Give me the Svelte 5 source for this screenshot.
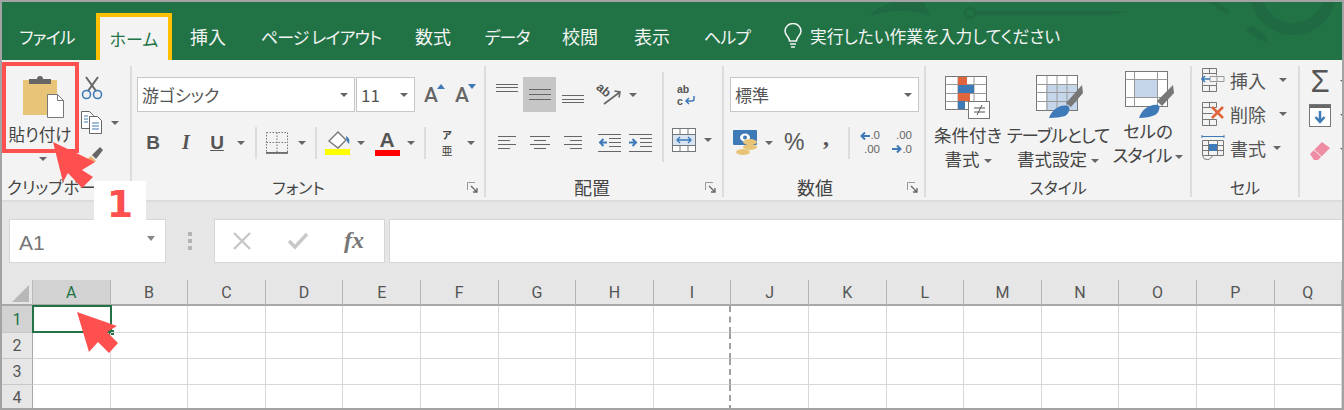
<script>
  const tabs = ["ファイル", "ホーム", "挿入", "ページ レイアウト", "数式", "データ", "校閲", "表示", "ヘルプ"];
  const cols = "ABCDEFGHIJKLMNOPQ".split("");
  const rows = [1, 2, 3, 4];
  const isKana = (s) => /^[\u30A0-\u30FF ]+$/.test(s);
</script>

{#snippet launcher()}
  <svg class="launcher" width="12" height="12" viewBox="0 0 12 12" fill="none" stroke="#777">
    <path d="M.5 8V.5H8" stroke="#999" />
    <path d="M4 4l6 6M10 6v4H6" stroke="#666" stroke-width="1.3" />
  </svg>
{/snippet}

<div class="frame">
  <header class="titlebar">
    <svg class="deco" width="500" height="58" viewBox="0 0 500 58" fill="none" stroke="#1f6a42">
      <path d="M28 14C36 2 58-4 82 0l6 14C68 6 48 8 28 14z" fill="#1f6a42" stroke="none" />
      <circle cx="128" cy="11" r="5" stroke-width="3" />
      <path d="M132 9h156l-20 4H132z" fill="#1f6a42" stroke="none" />
      <path d="M365-4l58 40" stroke-width="5" stroke-dasharray="26 26" />
      <circle cx="451" cy="-10" r="37" stroke-width="12" />
      <path d="M405 26c6 6 12 10 20 12" stroke-width="4" />
    </svg>
    <nav class="tabs">
      {#each tabs as tab, i}
        <div class="tab" class:active={i === 1} class:kana={isKana(tab)}>{tab}</div>
      {/each}
    </nav>
    <div class="tell">
      <svg width="20" height="26" viewBox="0 0 20 26" fill="none" stroke="#f4f4f4" stroke-width="1.5">
        <path d="M6.5 18c0-4-4.500-5.500-4.500-10a8 7.500 0 0 1 16 0c0 4.500-4.500 6-4.500 10z" />
        <path d="M7 21h6M8 24h4" />
      </svg>
      <span>実行したい作業を入力してください</span>
    </div>
  </header>

  <section class="ribbon">
    <div class="group clip">
      <div class="body clip-body">
        <div class="paste">
          <svg width="42" height="42" viewBox="0 0 42 42">
            <rect x="0" y="4" width="34" height="35" fill="#e8c478" />
            <path d="M6 8V3h8a3 3 0 0 1 6 0h8v5z" fill="#666" />
            <path d="M24.500 18.500h10l6 6v17h-16z" fill="#fff" stroke="#777" />
            <path d="M34.500 18.500v6h6" fill="none" stroke="#777" />
          </svg>
          <span>貼り付け</span>
          <i class="caret"></i>
        </div>
        <div class="clip-tools">
          <svg width="22" height="24" viewBox="0 0 22 24" fill="none">
            <path d="M5 1l10 14M17 1L7 15" stroke="#666" stroke-width="2" />
            <circle cx="5.500" cy="18.500" r="4" stroke="#3e79b8" stroke-width="1.600" />
            <circle cx="16.500" cy="18.500" r="4" stroke="#3e79b8" stroke-width="1.600" />
          </svg>
          <div class="copy">
            <svg width="22" height="23" viewBox="0 0 22 23" fill="#fff" stroke="#666">
              <path d="M.5.500h8l4 4v13H.5z" />
              <path d="M8.500 5.500h8l4 4v13h-12z" />
              <path d="M3 5h4M3 8h4M3 11h4M11 12h7M11 15h7M11 18h7" stroke="#3e79b8" />
            </svg>
            <i class="caret"></i>
          </div>
          <svg width="24" height="24" viewBox="0 0 24 24">
            <path d="M2 18l8-7 5 5-8 5z" fill="#e8b070" />
            <path d="M11 10l8-8 3 3-7 9z" fill="#666" />
          </svg>
        </div>
      </div>
      <div class="label clip-label">クリップボード</div>
    </div>

    <div class="group font">
      <div class="body">
        <div class="row font-top">
          <div class="combo font-name"><span>游ゴシック</span><i class="caret"></i></div>
          <div class="combo font-size"><span>11</span><i class="caret"></i></div>
          <span class="grow">A<svg width="8" height="5"><path d="M0 5l4-5 4 5z" fill="#3e79b8" /></svg></span>
          <span class="grow shrink">A<svg width="8" height="5"><path d="M0 0l4 5 4-5z" fill="#3e79b8" /></svg></span>
        </div>
        <div class="row font-bottom">
          <b class="fmt">B</b>
          <b class="fmt ital">I</b>
          <b class="fmt und">U</b>
          <i class="caret"></i>
          <i class="sep"></i>
          <svg width="22" height="22" viewBox="0 0 22 22" fill="none" stroke="#777" stroke-dasharray="1.500 1.500">
            <path d="M.5.500h21v20H.5zM11 .5v20M.5 10.500h21" />
            <path d="M0 21h22" stroke="#555" stroke-width="1.500" stroke-dasharray="none" />
          </svg>
          <i class="caret"></i>
          <i class="sep"></i>
          <svg width="27" height="27" viewBox="0 0 27 27">
            <path d="M4 12l9-9 8 8-8 8z" fill="#fff" stroke="#777" stroke-width="1.400" />
            <path d="M21 7c3 2 4 4 3 8-2-2-3-4-3-8z" fill="#3e79b8" />
            <rect x="0" y="20" width="25" height="6" fill="#ff0" />
          </svg>
          <i class="caret"></i>
          <span class="color-a">A<i></i></span>
          <i class="caret"></i>
          <i class="sep"></i>
          <span class="vert"><span>ア</span><span class="vert-kanji">亜</span></span>
          <i class="caret"></i>
        </div>
      </div>
      <div class="label shifted">フォント{@render launcher()}</div>
    </div>

    <div class="group align">
      <div class="body align-body">
        <div class="align-left">
          <div class="row align-top">
            <svg class="v-top" width="24" height="10" stroke="#666"><path d="M1 1.500h22M1 4.500h22M1 8.500h22" /></svg>
            <span class="mid"><svg width="24" height="13" stroke="#666"><path d="M1 1.500h22M1 6.500h22M1 11.500h22" /></svg></span>
            <svg class="v-bot" width="24" height="10" stroke="#666"><path d="M1 1.500h22M1 5.500h22M1 8.500h22" /></svg>
            <div class="orient">
              <span>ab</span>
              <svg width="24" height="22" viewBox="0 0 24 22" fill="none" stroke="#666">
                <path d="M6 20L22 8M16.500 7l5.500 1-1 5.500" stroke-width="1.600" />
              </svg>
            </div>
            <i class="caret"></i>
          </div>
          <div class="row align-bottom">
            <svg width="18" height="16" stroke="#666"><path d="M0 1.500h18M0 5.500h12M0 9.500h18M0 13.500h12" /></svg>
            <svg width="20" height="16" stroke="#666"><path d="M0 1.500h20M4 5.500h12M0 9.500h20M4 13.500h12" /></svg>
            <svg width="18" height="16" stroke="#666"><path d="M0 1.500h18M6 5.500h12M0 9.500h18M6 13.500h12" /></svg>
            <svg width="23" height="20" viewBox="0 0 23 20" stroke="#666" fill="none">
              <path d="M0 1.500h23M11 5.500h12M11 9.500h12M11 13.500h12M0 18.500h23" />
              <path d="M9 9.500H2M5.500 6L2 9.500 5.500 13" stroke="#3e79b8" stroke-width="2" />
            </svg>
            <svg width="23" height="20" viewBox="0 0 23 20" stroke="#666" fill="none">
              <path d="M0 1.500h23M11 5.500h12M11 9.500h12M11 13.500h12M0 18.500h23" />
              <path d="M0 9.500h7M3.500 6L7 9.500 3.500 13" stroke="#3e79b8" stroke-width="2" />
            </svg>
          </div>
        </div>
        <i class="sep tall"></i>
        <div class="align-right">
          <div class="wrap">
            <span>ab</span>
            <div class="wrap-line">
              <span>c</span>
              <svg width="12" height="10" viewBox="0 0 12 10"><path d="M10 0v3a2 2 0 0 1-2 2H2M5 2L2 5l3 3" fill="none" stroke="#3e79b8" stroke-width="1.500" /></svg>
            </div>
          </div>
          <div class="merge">
            <svg width="24" height="24" viewBox="0 0 24 24" fill="#fff" stroke="#777">
              <rect x=".5" y=".5" width="23" height="23" />
              <path d="M.5 6.500h23M.5 17.500h23M8 .5v6M16 .5v6M8 17.500v6M16 17.500v6" />
              <rect x="1" y="7" width="22" height="10" fill="#d8e4f2" stroke="none" />
              <path d="M5 12h14M8 9l-3 3 3 3M16 9l3 3-3 3" stroke="#3e79b8" stroke-width="1.400" fill="none" />
            </svg>
            <i class="caret"></i>
          </div>
        </div>
      </div>
      <div class="label shifted kanji">配置{@render launcher()}</div>
    </div>

    <div class="group number">
      <div class="body">
        <div class="row num-top">
          <div class="combo num-format"><span>標準</span><i class="caret"></i></div>
        </div>
        <div class="row num-bottom">
          <svg width="25" height="26" viewBox="0 0 25 26">
            <rect x="0" y="0" width="24" height="15" rx="1" fill="#3e79b8" />
            <ellipse cx="12" cy="7.500" rx="5" ry="4" fill="#fff" />
            <circle cx="12" cy="7.500" r="2" fill="#3e79b8" />
            <ellipse cx="17" cy="12" rx="7" ry="3" fill="#e8c478" />
            <ellipse cx="17" cy="17" rx="7" ry="3" fill="#e8c478" />
            <ellipse cx="10" cy="22" rx="7" ry="3" fill="#e8c478" />
          </svg>
          <i class="caret"></i>
          <span class="pct">%</span>
          <b class="comma">,</b>
          <i class="sep"></i>
          <span class="dec">
            <span><svg width="10" height="8"><path d="M10 4H2M5 .5L1.500 4 5 7.500" fill="none" stroke="#3e79b8" stroke-width="2" /></svg>.0</span>
            <span>.00</span>
          </span>
          <span class="dec second">
            <span>.00</span>
            <span><svg width="10" height="8"><path d="M0 4h8M5 .5L8.500 4 5 7.500" fill="none" stroke="#3e79b8" stroke-width="2" /></svg>.0</span>
          </span>
        </div>
      </div>
      <div class="label shifted kanji">数値{@render launcher()}</div>
    </div>

    <div class="group styles">
      <div class="body style-body">
        <div class="big big-cond">
          <svg width="46" height="44" viewBox="0 0 46 44">
            <rect x=".5" y=".5" width="41" height="33" fill="#fff" stroke="#777" />
            <path d="M.5 8.500h41M.5 17.500h41M.5 25.500h41M13 .5v33M29 .5v33" stroke="#999" />
            <rect x="13" y="1" width="9" height="8" fill="#e0643c" />
            <rect x="13" y="9" width="16" height="8" fill="#3e79b8" />
            <rect x="13" y="17" width="12" height="8" fill="#e0643c" />
            <rect x="13" y="25" width="7" height="8" fill="#3e79b8" />
            <rect x="23.500" y="25.500" width="21" height="17" fill="#fff" stroke="#777" />
            <path d="M29 36h11M29 32h11M37 29l-5 10" stroke="#555" fill="none" />
          </svg>
          <span>条件付き</span>
          <span>書式<i class="caret"></i></span>
        </div>
        <div class="big big-table">
          <svg width="48" height="44" viewBox="0 0 48 44">
            <rect x=".5" y=".5" width="41" height="35" fill="#fff" stroke="#777" />
            <rect x="10" y="10" width="31" height="25" fill="#c6d6ea" />
            <path d="M.5 9.500h41M.5 17.500h41M.5 26.500h41M11 .5v35M21 .5v35M31 .5v35" stroke="#999" />
            <path d="M30 28L46 10l1 8-12 14z" fill="#777" />
            <path d="M13 43c3-9 12-14 19-12 3 1 1 8-3 10-4 1-10 2-16 2z" fill="#3e79b8" />
          </svg>
          <span class="tight">テーブルとして</span>
          <span>書式設定<i class="caret"></i></span>
        </div>
        <div class="big big-cell">
          <svg width="50" height="48" viewBox="0 0 50 48">
            <rect x=".5" y=".5" width="42" height="35" fill="#fff" stroke="#777" />
            <rect x="10" y="9" width="23" height="18" fill="#c6d6ea" />
            <path d="M.5 8.500h42M.5 26.500h42M9.500 .5v35M32.500 .5v35" stroke="#999" fill="none" />
            <path d="M32 30L48 14l1 8-12 13z" fill="#777" />
            <path d="M14 47c3-9 11-14 19-13 3 1 1 8-3 10-4 2-10 3-16 3z" fill="#3e79b8" />
          </svg>
          <span>セルの</span>
          <span class="tight">スタイル<i class="caret"></i></span>
        </div>
      </div>
      <div class="label">スタイル</div>
    </div>

    <div class="group cells">
      <div class="body cell-body">
        <div class="cell-item">
          <svg width="24" height="24" viewBox="0 0 24 24" fill="none" stroke="#777">
            <path d="M1.500.5h14v5h-14zM1.500 17.500h14v6h-14zM8.500.5v5M8.500 17.500v6M1.500 5.500v12M15.500 5.500v2M15.500 14.500v3" />
            <path d="M9 8.500h14v5H9zM16 8.500v5" stroke="#999" />
            <path d="M9 11H1M4 8l-3 3 3 3" stroke="#3e79b8" stroke-width="1.600" />
          </svg>
          <span>挿入</span><i class="caret"></i>
        </div>
        <div class="cell-item">
          <svg width="24" height="24" viewBox="0 0 24 24" fill="none" stroke="#777">
            <path d="M1.500.5h14v5h-14zM1.500 17.500h14v6h-14zM8.500.5v5M8.500 17.500v6M1.500 5.500v12M1.500 11.500h10" />
            <path d="M11 5l11 11M22 5L11 16" stroke="#e0643c" stroke-width="2.600" />
          </svg>
          <span>削除</span><i class="caret"></i>
        </div>
        <div class="cell-item narrow">
          <svg width="24" height="26" viewBox="0 0 24 26" fill="none" stroke="#777">
            <path d="M1 1.500h22M1 0v3M23 0v3" stroke="#3e79b8" />
            <path d="M1.500 5.500h21v15h-21zM7.500 5.500v15M16.500 5.500v15M1.500 10.500h21M1.500 15.500h21M2 20.500c0 3 1 4 6 4l4-4" />
            <rect x="8" y="9" width="8" height="7" fill="#3e79b8" stroke="none" />
          </svg>
          <span>書式</span><i class="caret"></i>
        </div>
      </div>
      <div class="label">セル</div>
    </div>

    <div class="group edit">
      <div class="edit-body">
        <span class="sigma">Σ</span>
        <svg width="22" height="23" viewBox="0 0 22 23">
          <rect x=".5" y=".5" width="21" height="22" fill="#fff" stroke="#777" />
          <rect x="1" y="1" width="20" height="3" fill="#666" />
          <path d="M11 7v11M6.500 13l4.500 5 4.500-5" fill="none" stroke="#3e79b8" stroke-width="2.500" />
        </svg>
        <svg width="22" height="20" viewBox="0 0 22 20">
          <path d="M1 13L13 1l8 6L9 19H5z" fill="#ee8ca4" />
          <path d="M5 9l8 7" stroke="#f3f3f3" />
        </svg>
      </div>
      <div class="edit-carets"><i class="caret"></i><i class="caret"></i><i class="caret"></i></div>
    </div>
  </section>

  <section class="formula">
    <div class="namebox"><span>A1</span><i class="caret"></i></div>
    <div class="dots"><i></i><i></i><i></i></div>
    <div class="fx-buttons">
      <svg width="20" height="20" viewBox="0 0 20 20" fill="none" stroke="#c8c8c8" stroke-width="2.400"><path d="M2 2l16 16M18 2L2 18" /></svg>
      <svg width="22" height="18" viewBox="0 0 22 18" fill="none" stroke="#c8c8c8" stroke-width="3.400"><path d="M2 9l6 6L20 2" /></svg>
      <span class="fx">fx</span>
    </div>
    <div class="fx-input"></div>
  </section>

  <section class="sheet">
    <div class="corner"><svg width="17" height="17"><path d="M17 0v17H0z" fill="#b8b8b8" /></svg></div>
    {#each cols as c, i}
      <div class="col-head" class:on={i === 0}>{c}</div>
    {/each}
    {#each rows as r}
      <div class="row-head" class:on={r === 1}>{r}</div>
      {#each cols as c}
        <div class="cell" class:brk={c === "I"} class:selected={r === 1 && c === "A"}></div>
      {/each}
    {/each}
  </section>

  <div class="mark-paste"></div>
  <div class="num-badge">1</div>
  <svg class="pointer first" width="46" height="58" viewBox="0 0 46 58">
    <path d="M0 0l42 20-13 8 11 7-11 11-14-15-5 9z" fill="#ff5050" />
  </svg>
  <svg class="pointer second" width="46" height="46" viewBox="0 0 46 46">
    <path d="M0 0l40 14-10 6 11 11-9 10-11-11-9 10z" fill="#ff5050" />
  </svg>
</div>

<style>
  :global(body) {
    margin: 0;
    background: #fff;
  }
  .frame {
    position: relative;
    width: 1344px;
    height: 410px;
    box-sizing: border-box;
    border: 2px solid #a3a3a3;
    overflow: hidden;
    font-family: "Noto Sans CJK JP", "Noto Sans", sans-serif;
    color: #444;
    font-feature-settings: "palt";
  }
  i {
    font-style: normal;
    display: block;
  }
  .titlebar {
    position: relative;
    height: 58px;
    background: #217346;
    color: #f4f4f4;
    display: flex;
    align-items: stretch;
    padding-left: 2px;
    font-size: 18px;
  }
  .deco {
    position: absolute;
    right: 0;
    top: 0;
  }
  .tabs {
    position: relative;
    display: grid;
    grid-template-columns: 92px 76px 72px 154px 70px 78px 68px 76px 74px;
    padding-top: 11px;
  }
  .tab {
    text-align: center;
    line-height: 47px;
    height: 47px;
    white-space: nowrap;
  }
  .tab:first-child {
    padding-right: 6px;
  }
  .tab.kana {
    font-size: 17px;
    letter-spacing: -0.9px;
  }
  .tab.active {
    background: #f3f3f3;
    color: #217346;
    box-sizing: border-box;
    border: 4px solid #ffc000;
    border-bottom: 0;
    line-height: 43px;
    letter-spacing: 0;
  }
  .tell {
    position: relative;
    display: flex;
    align-items: center;
    gap: 7px;
    padding: 9px 0 0 19px;
    font-size: 16.800px;
  }
  .ribbon {
    display: flex;
    height: 142px;
    box-sizing: border-box;
    background: #f3f3f3;
    border-bottom: 2px solid #dcdcdc;
    padding: 6px 0 3px;
  }
  .group {
    display: flex;
    flex: none;
    flex-direction: column;
    box-sizing: border-box;
    border-right: 2px solid #dcdcdc;
  }
  .clip { width: 130px; }
  .font { width: 354px; }
  .align { width: 238px; }
  .number { width: 202px; }
  .styles { width: 266px; }
  .cells { width: 108px; }
  .edit { width: 42px; border-right: 0; flex-direction: row; }
  .body {
    flex: 1;
    padding-top: 11px;
    min-height: 0;
  }
  .label {
    display: flex;
    align-items: center;
    justify-content: center;
    position: relative;
    height: 20px;
    font-size: 16px;
    white-space: nowrap;
  }
  .label.shifted {
    padding-right: 24px;
  }
  .label.kanji {
    font-size: 18px;
  }
  .clip-label {
    justify-content: flex-start;
    padding-left: 5px;
    font-size: 16.500px;
  }
  .launcher {
    position: absolute;
    right: 5px;
    top: 5px;
  }
  .caret {
    flex: none;
    width: 0;
    height: 0;
    border: 4px solid transparent;
    border-top: 4px solid #666;
    border-bottom: 0;
  }
  .sep {
    flex: none;
    width: 2px;
    height: 32px;
    background: #dcdcdc;
    justify-self: center;
  }
  .row {
    display: flex;
    align-items: center;
    height: 35px;
  }
  .combo {
    box-sizing: border-box;
    height: 35px;
    background: #fff;
    border: 1px solid #c6c6c6;
    display: flex;
    align-items: center;
    justify-content: space-between;
    padding: 0 6px 0 4px;
    font-size: 17px;
    color: #555;
  }

  /* clipboard */
  .clip-body {
    display: flex;
    padding-top: 10px;
  }
  .paste {
    width: 76px;
    display: flex;
    flex-direction: column;
    align-items: center;
    font-size: 16.500px;
    flex: none;
  }
  .paste svg {
    align-self: flex-start;
    margin-left: 21px;
  }
  .paste span {
    line-height: 22px;
    margin-top: 5px;
  }
  .paste .caret {
    margin: 12px 0 0 6px;
  }
  .clip-tools {
    display: flex;
    flex-direction: column;
    gap: 11px;
    padding-left: 3px;
  }
  .copy {
    display: flex;
    align-items: center;
    gap: 8px;
  }

  /* font */
  .font {
    padding-left: 5px;
  }
  .font-name { width: 218px; }
  .font-size { width: 59px; margin-left: 1px; }
  .grow {
    position: relative;
    display: flex;
    align-items: flex-start;
    font: 500 21px Roboto, sans-serif;
    color: #666;
    margin-left: 9px;
    width: 24px;
  }
  .grow + .grow { margin-left: 7px; }
  .grow svg { margin: 1px 0 0 -1px; }
  .font-bottom {
    margin-top: 13px;
    display: grid;
    grid-template-columns: 32px 34px 28px 20px 10px 32px 18px 10px 34px 12px 40px 8px 20px 24px 24px;
    justify-items: center;
  }
  .fmt {
    font: 700 19px "Liberation Sans", sans-serif;
    color: #555;
  }
  .ital { font-style: italic; font-family: "Liberation Serif", serif; font-size: 20px; }
  .und { text-decoration: underline; }
  .color-a {
    display: flex;
    flex-direction: column;
    align-items: center;
    width: 25px;
    font: 700 21px/20px "Liberation Sans", sans-serif;
    color: #555;
  }
  .color-a i {
    width: 25px;
    height: 6px;
    background: #f00;
  }
  .vert {
    display: flex;
    flex-direction: column;
    align-items: center;
    font-size: 10px;
    line-height: 15px;
    font-weight: 700;
  }
  .vert-kanji {
    font-size: 11px;
    line-height: 16px;
    font-weight: 400;
  }

  /* alignment */
  .align-body {
    display: flex;
  }
  .align-left {
    width: 176px;
    padding-left: 4px;
    box-sizing: border-box;
    flex: none;
  }
  .align-top, .align-bottom {
    display: grid;
    grid-template-columns: 33px 33px 33px 40px 8px;
    justify-items: center;
  }
  .align-bottom {
    margin-top: 13px;
    grid-template-columns: 33px 33px 33px 40px 22px;
  }
  .mid {
    display: flex;
    width: 33px;
    height: 35px;
    align-items: center;
    justify-content: center;
    background: #c6c6c6;
  }
  .v-top { align-self: start; margin-top: 6px; }
  .v-bot { align-self: end; margin-bottom: 8px; }
  .orient {
    display: flex;
    align-items: center;
    width: 26px;
    height: 26px;
    position: relative;
  }
  .orient span {
    position: absolute;
    left: 0;
    top: 1px;
    font: 700 12.500px/15px "Liberation Sans", sans-serif;
    color: #555;
    transform: rotate(40deg);
  }
  .orient svg {
    margin-left: 2px;
  }
  .tall {
    height: 90px;
    margin-top: -5px;
  }
  .align-right {
    padding-left: 12px;
    display: flex;
    flex-direction: column;
  }
  .wrap {
    width: 22px;
    height: 25px;
    margin: 6px 0 0 1px;
    font: 700 10.500px/12px "Liberation Sans", sans-serif;
    color: #555;
  }
  .wrap-line {
    display: flex;
    align-items: center;
    gap: 1px;
  }
  .merge {
    display: flex;
    align-items: center;
    gap: 8px;
    margin: 20px 0 0 -4px;
  }

  /* number */
  .number { padding-left: 6px; }
  .num-format { width: 189px; }
  .num-bottom {
    margin-top: 13px;
    display: flex;
    padding-left: 3px;
  }
  .num-bottom .caret { margin-left: 7px; }
  .pct {
    font-family: "Liberation Sans", sans-serif;
    font-size: 23px;
    color: #555;
    margin-left: 11px;
    width: 24px;
  }
  .comma {
    font: 700 24px "Liberation Serif", serif;
    color: #555;
    width: 22px;
    text-align: center;
    margin: -10px 0 0 7px;
  }
  .num-bottom .sep { margin-left: 11px; }
  .dec {
    display: flex;
    flex-direction: column;
    align-items: flex-end;
    font: 11.500px/13.500px "Liberation Sans", sans-serif;
    color: #666;
    width: 20px;
    margin-left: 10px;
  }
  .dec.second { margin-left: 12px; }
  .dec span { display: flex; align-items: center; }

  /* styles */
  .style-body {
    display: flex;
    padding-top: 5px;
  }
  .big {
    display: flex;
    flex-direction: column;
    align-items: center;
    font-size: 17.500px;
    line-height: 24px;
    white-space: nowrap;
  }
  .big svg {
    flex: none;
    margin-bottom: 3px;
  }
  .big span {
    display: flex;
    align-items: center;
    gap: 4px;
  }
  .big .tight { letter-spacing: -1px; }
  .big .caret { margin-top: 3px; }
  .big-cond { width: 84px; padding-top: 5px; }
  .big-table { width: 96px; padding-top: 4px; }
  .big-cell { width: 84px; }
  .big-table svg { margin-left: 4px; margin-bottom: 4px; }
  .big-cell svg { margin-left: 4px; margin-bottom: 0; }

  /* cells */
  .cell-body {
    display: flex;
    flex-direction: column;
    gap: 8px;
    padding: 1px 0 0 9px;
  }
  .cell-item {
    display: flex;
    align-items: center;
    height: 26px;
    font-size: 18px;
    color: #555;
  }
  .cell-item span { margin: 0 13px 0 5px; }
  .cell-item.narrow span { margin-right: 7px; }

  /* editing */
  .edit-body {
    display: flex;
    flex-direction: column;
    align-items: center;
    padding: 0 0 0 9px;
    gap: 14px;
  }
  .sigma {
    font: 400 31px/30px "Liberation Sans", sans-serif;
    color: #555;
    height: 30px;
    margin-top: 1px;
    margin-bottom: -7px;
  }
  .edit-carets {
    display: flex;
    flex-direction: column;
    gap: 30px;
    padding: 14px 0 0 9px;
  }

  /* formula bar */
  .formula {
    display: flex;
    height: 78px;
    box-sizing: border-box;
    background: #e6e6e6;
    padding: 17px 0 0 7px;
    align-items: flex-start;
  }
  .namebox, .fx-buttons, .fx-input {
    height: 44px;
    box-sizing: border-box;
    background: #fff;
    border: 1px solid #d6d6d6;
  }
  .namebox {
    width: 157px;
    display: flex;
    align-items: center;
    justify-content: space-between;
    padding: 4px 10px 0 9px;
    font: 21px "Liberation Sans", sans-serif;
    color: #777;
  }
  .namebox .caret { margin-top: -10px; border-width: 5px 4px 0; border-top-color: #888; }
  .dots {
    width: 48px;
    display: flex;
    flex-direction: column;
    align-items: center;
    gap: 3px;
    padding-top: 13px;
  }
  .dots i {
    width: 4px;
    height: 4px;
    background: #b4b4b4;
  }
  .fx-buttons {
    width: 171px;
    display: flex;
    align-items: center;
    justify-content: space-between;
    padding: 0 20px 0 17px;
  }
  .fx {
    font: italic 700 24px "Liberation Serif", serif;
    color: #777;
    margin-top: -2px;
  }
  .fx-input {
    flex: 1;
    margin-left: 4px;
    border-right: 0;
  }

  /* sheet */
  .sheet {
    display: grid;
    grid-template-columns: 31px repeat(16, 77.600px) 1fr;
    grid-template-rows: 26px 27px 26px 26px 26px;
    background: #fff;
    font: 16px Roboto, sans-serif;
    color: #555;
  }
  .corner {
    background: #e6e6e6;
    border-bottom: 2px solid #a8a8a8;
    border-right: 1px solid #bbb;
    box-sizing: border-box;
    display: flex;
    align-items: center;
    padding: 3px 0 0 10px;
  }
  .col-head {
    background: #e6e6e6;
    border-right: 1px solid #b4b4b4;
    border-bottom: 2px solid #a8a8a8;
    box-sizing: border-box;
    display: flex;
    align-items: center;
    justify-content: center;
    padding-top: 1px;
  }
  .col-head.on {
    background: #d2d2d2;
    color: #217346;
  }
  .row-head {
    background: #e6e6e6;
    border-bottom: 1px solid #c8c8c8;
    border-right: 1px solid #a8a8a8;
    box-sizing: border-box;
    display: flex;
    align-items: center;
    justify-content: center;
  }
  .row-head.on {
    background: #d2d2d2;
    color: #217346;
  }
  .cell {
    box-sizing: border-box;
    border-right: 1px solid #d8d8d8;
    border-bottom: 1px solid #d8d8d8;
    position: relative;
  }
  .cell.brk {
    border-right: 2px dashed #a0a0a0;
  }
  .cell.selected {
    border: 2px solid #217346;
    margin: -1px -1px 0 -1px;
  }
  .cell.selected::after {
    content: "";
    position: absolute;
    right: -4px;
    bottom: -4px;
    width: 5px;
    height: 5px;
    background: #217346;
  }

  /* annotations */
  .mark-paste {
    position: absolute;
    left: 0;
    top: 60px;
    width: 77px;
    height: 91px;
    box-sizing: border-box;
    border: 4px solid #ff5050;
  }
  .num-badge {
    position: absolute;
    left: 92px;
    top: 179px;
    width: 52px;
    height: 43px;
    background: #fff;
    color: #ff5050;
    font: 700 38px/47px "DejaVu Sans", sans-serif;
    text-align: center;
  }
  .pointer {
    position: absolute;
  }
  .pointer.first {
    left: 51px;
    top: 140px;
  }
  .pointer.second {
    left: 75px;
    top: 310px;
  }
</style>
